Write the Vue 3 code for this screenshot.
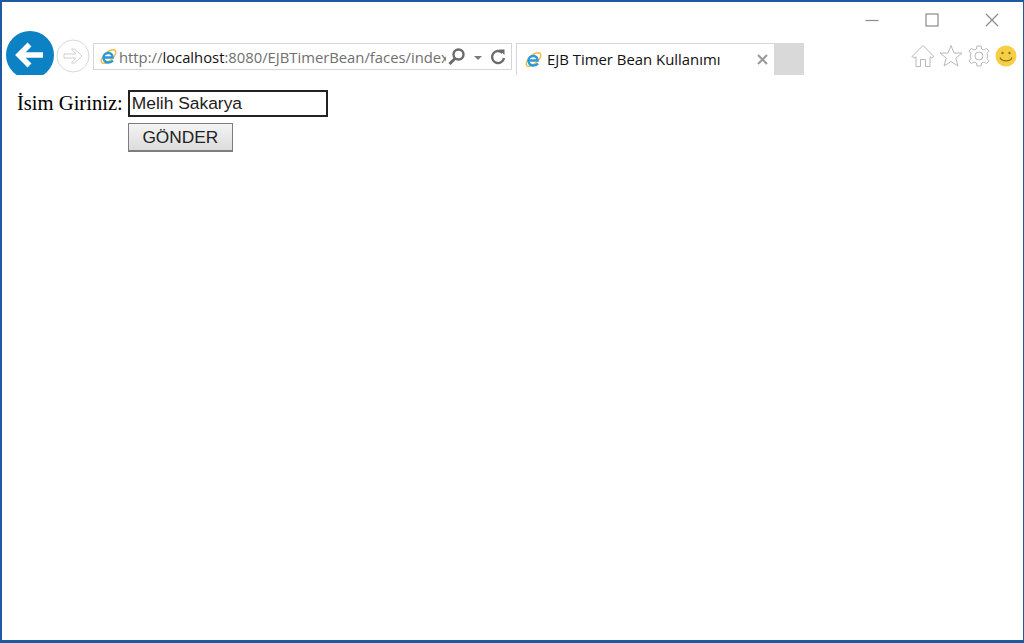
<script setup>
const winButtons = ['min', 'max', 'close']
</script>

<template>
  <div class="window">
    <div class="titlebar">
      <span v-for="b in winButtons" :key="b" class="winbtn">
        <svg width="14" height="14" viewBox="0 0 14 14" fill="none" stroke="#8a8a8a" stroke-width="1.2">
          <path v-if="b === 'min'" d="M0.5 7.5H13.5" />
          <rect v-else-if="b === 'max'" x="1" y="1" width="12" height="12" />
          <path v-else d="M1 1L13 13M13 1L1 13" />
        </svg>
      </span>
    </div>

    <div class="toolbar">
      <div class="back">
        <svg width="48" height="48" viewBox="0 0 48 48">
          <circle cx="24" cy="24" r="24" fill="#0c82c4" />
          <path d="M37 24H15M23.5 13.5L13 24L23.5 34.5" fill="none" stroke="#fff" stroke-width="5.5" />
        </svg>
      </div>
      <div class="forward">
        <svg width="34" height="34" viewBox="0 0 34 34" fill="none">
          <circle cx="17" cy="17" r="16" stroke="#d8d8d8" />
          <path d="M8 15H20L15.5 10H18.5L26 17L18.5 24H15.5L20 19H8Z" stroke="#d0d0d0" />
        </svg>
      </div>

      <div class="address">
        <svg class="ie" width="17" height="17" viewBox="0 0 17 17" fill="none">
          <ellipse cx="8.5" cy="8.5" rx="9" ry="4.2" transform="rotate(-42 8.5 8.5)" stroke="#f2bd3c" stroke-width="1.4" />
          <path d="M3.5 9.5H12.5C12.5 6.5 10.8 5 8.5 5C5.5 5 3.5 7 3.5 9.5ZM3.5 9.5C3.5 13 5.5 14.5 8.5 14.5C10.5 14.5 12 13.8 13 12.5" stroke="#2b9ad8" stroke-width="2.4" />
        </svg>
        <span class="url"><span class="muted">http://</span><span class="host">localhost</span><span class="muted">:8080/EJBTimerBean/faces/index</span></span>
        <svg class="search" width="20" height="20" viewBox="0 0 20 20" fill="none" stroke="#6a6a6a">
          <circle cx="11.5" cy="7.5" r="5" stroke-width="2.4" />
          <path d="M8 11.5L2.5 17" stroke-width="3" />
        </svg>
        <span class="caret"></span>
        <svg class="refresh" width="18" height="18" viewBox="0 0 18 18" fill="none" stroke="#6a6a6a">
          <path d="M13.5 5A6 6 0 1 0 15 10" stroke-width="2.4" />
          <path d="M10 1.5H15.5V7Z" fill="#6a6a6a" stroke="none" />
        </svg>
      </div>

      <div class="tab">
        <svg class="ie" width="17" height="17" viewBox="0 0 17 17" fill="none">
          <ellipse cx="8.5" cy="8.5" rx="9" ry="4.2" transform="rotate(-42 8.5 8.5)" stroke="#f2bd3c" stroke-width="1.4" />
          <path d="M3.5 9.5H12.5C12.5 6.5 10.8 5 8.5 5C5.5 5 3.5 7 3.5 9.5ZM3.5 9.5C3.5 13 5.5 14.5 8.5 14.5C10.5 14.5 12 13.8 13 12.5" stroke="#2b9ad8" stroke-width="2.4" />
        </svg>
        <span class="tab-title">EJB Timer Bean Kullanımı</span>
        <svg class="tab-close" width="11" height="11" viewBox="0 0 11 11" stroke="#9a9a9a" stroke-width="2">
          <path d="M1 1L10 10M10 1L1 10" />
        </svg>
      </div>
      <div class="newtab"></div>

      <div class="tools">
        <svg width="24" height="24" viewBox="0 0 24 24" fill="none" stroke="#b8b8b8">
          <path d="M1 12.5L12 1.5L23 12.5L20.5 14L19 12.7V22.5H14.5V15.5H9.5V22.5H5V12.7L3.5 14Z" />
        </svg>
        <svg width="24" height="24" viewBox="0 0 24 24" fill="none" stroke="#b8b8b8">
          <path d="M12 1.5L15 9H23L16.8 14L19 22L12 17.5L5 22L7.2 14L1 9H9Z" />
        </svg>
        <svg width="24" height="24" viewBox="0 0 24 24" fill="none" stroke="#b8b8b8">
          <circle cx="12" cy="12" r="4" />
          <path d="M10 2H14L14.6 5L17 6L19.6 4.4L22 7.2L20 9.4L20.8 12L20 14.6L22 16.8L19.6 19.6L17 18L14.6 19L14 22H10L9.4 19L7 18L4.4 19.6L2 16.8L4 14.6L3.2 12L4 9.4L2 7.2L4.4 4.4L7 6L9.4 5Z" />
        </svg>
        <svg width="22" height="22" viewBox="0 0 22 22" fill="none">
          <circle cx="11" cy="11" r="10.5" fill="#f7cf45" />
          <circle cx="7.5" cy="8" r="1.2" fill="#8a7420" />
          <circle cx="14.5" cy="8" r="1.2" fill="#8a7420" />
          <path d="M5 12.5C6.5 17 15.5 17 17 12.5" stroke="#8a7420" stroke-width="1.2" />
        </svg>
      </div>
    </div>

    <form class="form" @submit.prevent>
      <label class="label" for="name">İsim Giriniz:</label>
      <input id="name" class="input" type="text" value="Melih Sakarya" />
      <button class="button" type="submit">GÖNDER</button>
    </form>
  </div>
</template>

<style>
html, body {
  margin: 0;
  background: #fff;
}
</style>

<style scoped>
.window {
  box-sizing: border-box;
  width: 1024px;
  height: 643px;
  overflow: hidden;
  background: #fff;
  border-style: solid;
  border-color: #1f5a9e;
  border-width: 2px 1px 3px 2px;
}
.titlebar {
  display: flex;
  justify-content: flex-end;
  height: 28px;
  padding-right: 1px;
}
.winbtn {
  display: flex;
  align-items: center;
  justify-content: center;
  width: 60px;
  height: 35px;
}
.toolbar {
  display: flex;
  align-items: flex-start;
  height: 45px;
  overflow: hidden;
}
.back {
  margin: 1px 0 0 4px;
  height: 44px;
  overflow: hidden;
  line-height: 0;
}
.forward {
  margin: 9px 0 0 2px;
  line-height: 0;
}
.address {
  box-sizing: border-box;
  display: flex;
  align-items: center;
  width: 419px;
  height: 27px;
  margin: 13px 0 0 3px;
  padding: 0 4px 0 6px;
  border: 1px solid #d6d6d6;
}
.ie {
  flex: none;
}
.url {
  flex: 1;
  min-width: 0;
  margin-left: 2px;
  overflow: hidden;
  white-space: nowrap;
  font: 14.8px "Open Sans", sans-serif;
}
.muted {
  color: #6f6f6f;
}
.host {
  color: #111;
}
.search {
  flex: none;
  margin-left: 1px;
}
.caret {
  flex: none;
  width: 0;
  height: 0;
  margin: 2px 7px 0 7.5px;
  border-style: solid;
  border-width: 4.5px 4px 0;
  border-color: #7a7a7a transparent transparent;
}
.refresh {
  flex: none;
}
.tab {
  box-sizing: border-box;
  display: flex;
  align-items: center;
  width: 258px;
  height: 32px;
  margin: 13px 0 0 4px;
  padding: 0 6px 0 8px;
  border-top: 1px solid #d6d6d6;
  border-left: 1px solid #d6d6d6;
}
.tab-title {
  flex: 1;
  margin: 0 0 2px 5px;
  color: #111;
  white-space: nowrap;
  font: 14.9px "Open Sans", sans-serif;
}
.newtab {
  width: 30px;
  height: 32px;
  margin-top: 13px;
  background: #d9d9d9;
}
.tools {
  display: flex;
  align-items: center;
  gap: 4px;
  margin: 14px 0 0 auto;
  padding-right: 6px;
}
.form {
  display: grid;
  grid-template-columns: max-content 200px;
  justify-content: start;
  column-gap: 5px;
  row-gap: 6px;
  padding: 15px 0 0 15px;
}
.label {
  align-self: center;
  color: #000;
  font: 20.6px "Liberation Serif", serif;
}
.input {
  box-sizing: border-box;
  width: 200px;
  height: 27px;
  margin: 0;
  padding: 0 2px;
  border: 2px solid #222;
  outline: none;
  color: #222;
  background: #fff;
  font: 17.4px "Liberation Sans", sans-serif;
}
.button {
  grid-column: 2;
  box-sizing: border-box;
  width: 105px;
  height: 29px;
  margin: 0;
  padding: 0;
  border: 1px solid #7d7d7d;
  border-width: 1px 1px 2px;
  color: #222;
  background: linear-gradient(#f4f4f4, #dcdcdc);
  font: 17.3px "Liberation Sans", sans-serif;
}
</style>
